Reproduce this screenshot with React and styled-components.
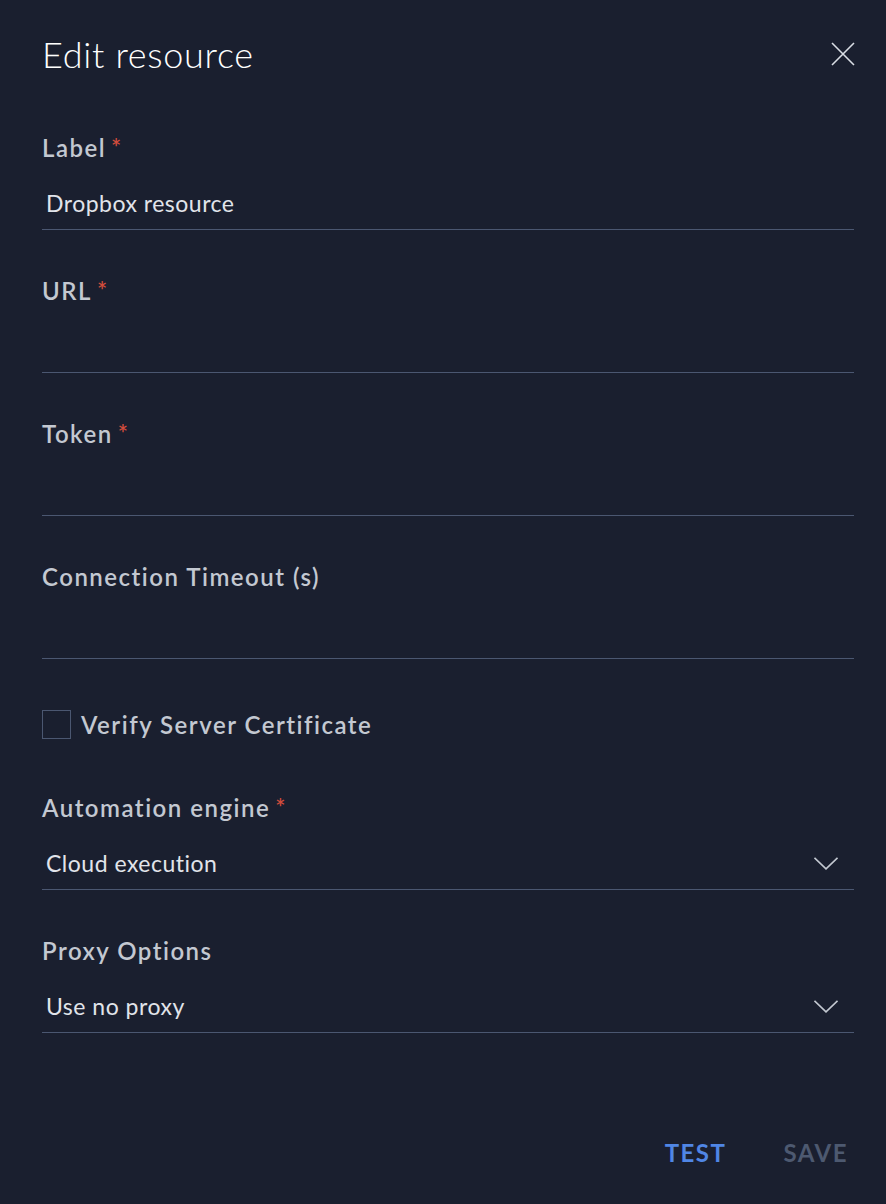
import React from "react";
import styled, { createGlobalStyle } from "styled-components";

const GlobalStyle = createGlobalStyle`
    html, body {
        margin: 0;
        padding: 0;
        background: #1a1f2f;
    }
    * { box-sizing: border-box; }
`;

const Panel = styled.div`
    width: 886px;
    min-height: 1204px;
    background: #1a1f2f;
    padding: 24px 32px 0 42px;
    font-family: Lato, "Liberation Sans", sans-serif;
    display: flex;
    flex-direction: column;
`;

const Header = styled.div`
    display: flex;
    align-items: center;
    justify-content: space-between;
    height: 60px;
    margin-bottom: 47px;
`;

const Title = styled.h1`
    margin: 0;
    font-size: 36px;
    font-weight: 300;
    color: #ffffff;
    letter-spacing: 0.7px;
`;

const CloseButton = styled.button`
    background: none;
    border: none;
    padding: 0;
    width: 24px;
    height: 24px;
    margin-right: -1px;
    display: flex;
    align-items: center;
    justify-content: center;
    cursor: pointer;
`;

const Form = styled.div`
    display: flex;
    flex-direction: column;
    gap: 44px;
`;

const Field = styled.div`
    display: flex;
    flex-direction: column;
    gap: 20px;
`;

const Label = styled.label`
    height: 32px;
    line-height: 34px;
    font-size: 24px;
    font-weight: 600;
    letter-spacing: 1.5px;
    color: #c3c8d1;
`;

const Required = styled.span`
    color: #d24c3c;
    margin-left: 5px;
`;

const InputBox = styled.div`
    height: 47px;
    padding: 0 16px 6px 4px;
    border-bottom: 1px solid #4b5771;
    display: flex;
    align-items: center;
    justify-content: space-between;
    font-size: 23px;
    letter-spacing: 0.5px;
    color: #e1e4ea;
`;

const Input = styled.input`
    background: transparent;
    border: none;
    outline: none;
    padding: 0;
    flex: 1;
    font: inherit;
    letter-spacing: inherit;
    color: inherit;
`;

const CheckRow = styled.label`
    display: flex;
    align-items: center;
    gap: 10px;
    height: 30px;
    margin: 6px 0 8px 0;
    font-size: 24px;
    font-weight: 600;
    letter-spacing: 1.5px;
    color: #c3c8d1;
`;

const Checkbox = styled.span`
    width: 29px;
    height: 29px;
    border: 1px solid #4b5771;
`;

const Footer = styled.div`
    display: flex;
    justify-content: flex-end;
    gap: 57px;
    margin-top: 105px;
    padding-right: 6px;
`;

const TextButton = styled.button`
    background: none;
    border: none;
    padding: 0;
    font-family: inherit;
    font-size: 24px;
    font-weight: 700;
    letter-spacing: 1.5px;
    color: ${p => (p.$disabled ? "#4d5970" : "#5086e5")};
    cursor: ${p => (p.$disabled ? "default" : "pointer")};
`;

const Chevron = () => (
    <svg width="24" height="13" viewBox="0 0 24 13" fill="none">
        <path d="M0.5 0.8 L12 11.8 L23.5 0.8" stroke="#c3c8d1" strokeWidth="1.6" />
    </svg>
);

const CloseIcon = () => (
    <svg width="24" height="24" viewBox="0 0 24 24" fill="none">
        <path d="M1 1 L23 23 M23 1 L1 23" stroke="#d9dde4" strokeWidth="1.6" />
    </svg>
);

const fields = [
    { label: "Label", required: true, value: "Dropbox resource" },
    { label: "URL", required: true, value: "" },
    { label: "Token", required: true, value: "" },
    { label: "Connection Timeout (s)", required: false, value: "" },
];

const selects = [
    { label: "Automation engine", required: true, value: "Cloud execution" },
    { label: "Proxy Options", required: false, value: "Use no proxy" },
];

export default function App() {
    return (
        <>
            <GlobalStyle />
            <Panel>
                <Header>
                    <Title>Edit resource</Title>
                    <CloseButton aria-label="close">
                        <CloseIcon />
                    </CloseButton>
                </Header>
                <Form>
                    {fields.map((f, i) => (
                        <Field key={i}>
                            <Label>
                                {f.label}
                                {f.required && <Required>*</Required>}
                            </Label>
                            <InputBox>
                                <Input readOnly defaultValue={f.value} />
                            </InputBox>
                        </Field>
                    ))}
                    <CheckRow>
                        <Checkbox />
                        Verify Server Certificate
                    </CheckRow>
                    {selects.map((s, i) => (
                        <Field key={i}>
                            <Label>
                                {s.label}
                                {s.required && <Required>*</Required>}
                            </Label>
                            <InputBox>
                                <span>{s.value}</span>
                                <Chevron />
                            </InputBox>
                        </Field>
                    ))}
                </Form>
                <Footer>
                    <TextButton>TEST</TextButton>
                    <TextButton $disabled>SAVE</TextButton>
                </Footer>
            </Panel>
        </>
    );
}
